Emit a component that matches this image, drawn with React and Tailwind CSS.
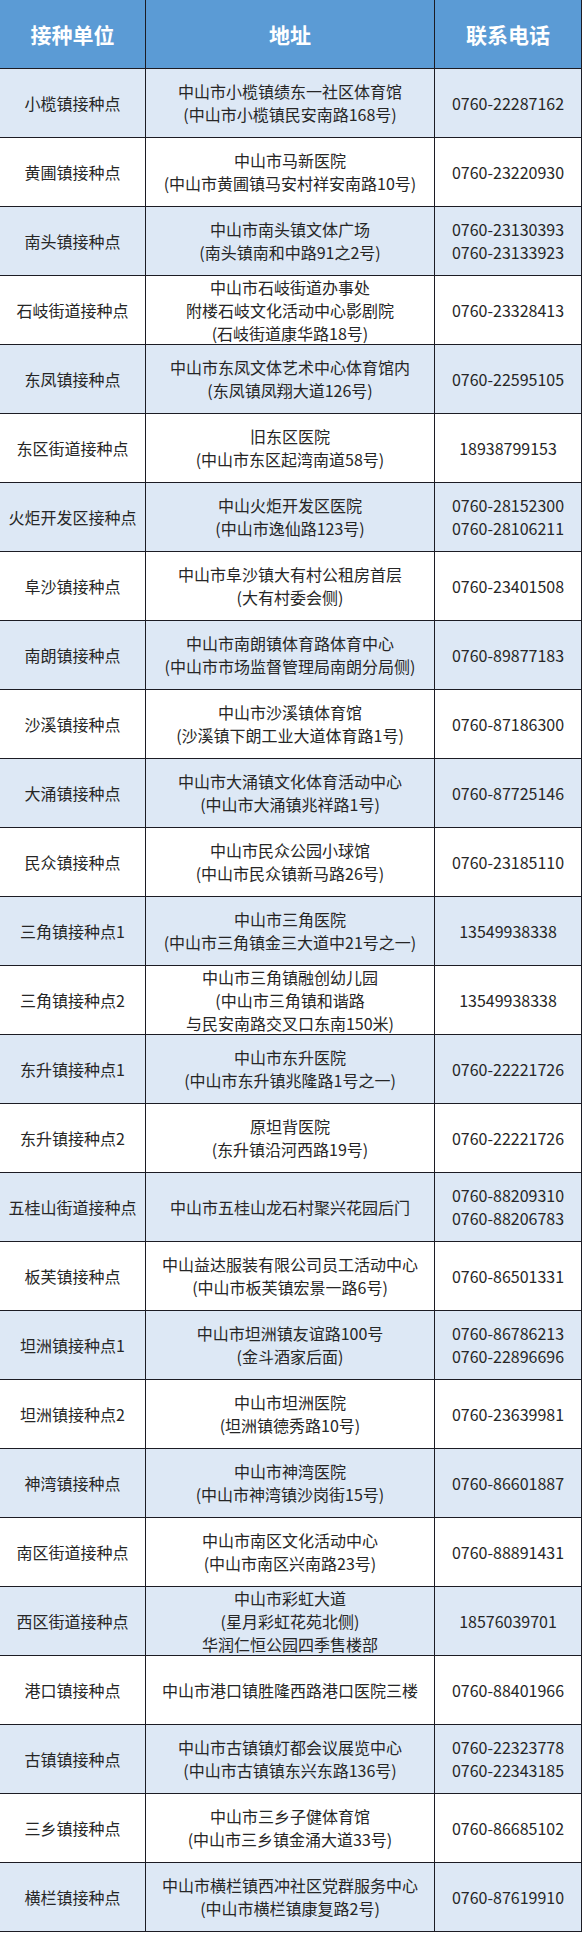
import React from 'react';

const rows = [
  ['小榄镇接种点', ['中山市小榄镇绩东一社区体育馆', '(中山市小榄镇民安南路168号)'], ['0760-22287162']],
  ['黄圃镇接种点', ['中山市马新医院', '(中山市黄圃镇马安村祥安南路10号)'], ['0760-23220930']],
  ['南头镇接种点', ['中山市南头镇文体广场', '(南头镇南和中路91之2号)'], ['0760-23130393', '0760-23133923']],
  ['石岐街道接种点', ['中山市石岐街道办事处', '附楼石岐文化活动中心影剧院', '(石岐街道康华路18号)'], ['0760-23328413']],
  ['东凤镇接种点', ['中山市东凤文体艺术中心体育馆内', '(东凤镇凤翔大道126号)'], ['0760-22595105']],
  ['东区街道接种点', ['旧东区医院', '(中山市东区起湾南道58号)'], ['18938799153']],
  ['火炬开发区接种点', ['中山火炬开发区医院', '(中山市逸仙路123号)'], ['0760-28152300', '0760-28106211']],
  ['阜沙镇接种点', ['中山市阜沙镇大有村公租房首层', '(大有村委会侧)'], ['0760-23401508']],
  ['南朗镇接种点', ['中山市南朗镇体育路体育中心', '(中山市市场监督管理局南朗分局侧)'], ['0760-89877183']],
  ['沙溪镇接种点', ['中山市沙溪镇体育馆', '(沙溪镇下朗工业大道体育路1号)'], ['0760-87186300']],
  ['大涌镇接种点', ['中山市大涌镇文化体育活动中心', '(中山市大涌镇兆祥路1号)'], ['0760-87725146']],
  ['民众镇接种点', ['中山市民众公园小球馆', '(中山市民众镇新马路26号)'], ['0760-23185110']],
  ['三角镇接种点1', ['中山市三角医院', '(中山市三角镇金三大道中21号之一)'], ['13549938338']],
  ['三角镇接种点2', ['中山市三角镇融创幼儿园', '(中山市三角镇和谐路', '与民安南路交叉口东南150米)'], ['13549938338']],
  ['东升镇接种点1', ['中山市东升医院', '(中山市东升镇兆隆路1号之一)'], ['0760-22221726']],
  ['东升镇接种点2', ['原坦背医院', '(东升镇沿河西路19号)'], ['0760-22221726']],
  ['五桂山街道接种点', ['中山市五桂山龙石村聚兴花园后门'], ['0760-88209310', '0760-88206783']],
  ['板芙镇接种点', ['中山益达服装有限公司员工活动中心', '(中山市板芙镇宏景一路6号)'], ['0760-86501331']],
  ['坦洲镇接种点1', ['中山市坦洲镇友谊路100号', '(金斗酒家后面)'], ['0760-86786213', '0760-22896696']],
  ['坦洲镇接种点2', ['中山市坦洲医院', '(坦洲镇德秀路10号)'], ['0760-23639981']],
  ['神湾镇接种点', ['中山市神湾医院', '(中山市神湾镇沙岗街15号)'], ['0760-86601887']],
  ['南区街道接种点', ['中山市南区文化活动中心', '(中山市南区兴南路23号)'], ['0760-88891431']],
  ['西区街道接种点', ['中山市彩虹大道', '(星月彩虹花苑北侧)', '华润仁恒公园四季售楼部'], ['18576039701']],
  ['港口镇接种点', ['中山市港口镇胜隆西路港口医院三楼'], ['0760-88401966']],
  ['古镇镇接种点', ['中山市古镇镇灯都会议展览中心', '(中山市古镇镇东兴东路136号)'], ['0760-22323778', '0760-22343185']],
  ['三乡镇接种点', ['中山市三乡子健体育馆', '(中山市三乡镇金涌大道33号)'], ['0760-86685102']],
  ['横栏镇接种点', ['中山市横栏镇西冲社区党群服务中心', '(中山市横栏镇康复路2号)'], ['0760-87619910']],
];

function Cell({ lines, className = '' }) {
  return (
    <div className={`flex flex-col items-center justify-center border-r border-b border-[#1c1c24] text-center leading-[23px] ${className}`}>
      {lines.map((l, i) => (
        <div key={i} className="whitespace-nowrap">{l}</div>
      ))}
    </div>
  );
}

export default function App() {
  return (
    <div className="w-[584px] bg-white font-['Noto_Sans_CJK_SC','Microsoft_YaHei',sans-serif] text-[16px] text-[#262626]">
      <div className="w-[582px] grid grid-cols-[146px_289px_147px] auto-rows-[69px]">
        {/* header */}
        <Cell lines={['接种单位']} className="bg-[#5b9bd5] text-white font-bold text-[21px]" />
        <Cell lines={['地址']} className="bg-[#5b9bd5] text-white font-bold text-[21px]" />
        <Cell lines={['联系电话']} className="bg-[#5b9bd5] text-white font-bold text-[21px]" />

        {rows.map(([name, addr, phones], i) => {
          const bg = i % 2 === 0 ? 'bg-[#dde8f5]' : 'bg-white';
          return (
            <React.Fragment key={i}>
              <Cell lines={[name]} className={bg} />
              <Cell lines={addr} className={bg} />
              <Cell lines={phones} className={bg} />
            </React.Fragment>
          );
        })}
      </div>
    </div>
  );
}
